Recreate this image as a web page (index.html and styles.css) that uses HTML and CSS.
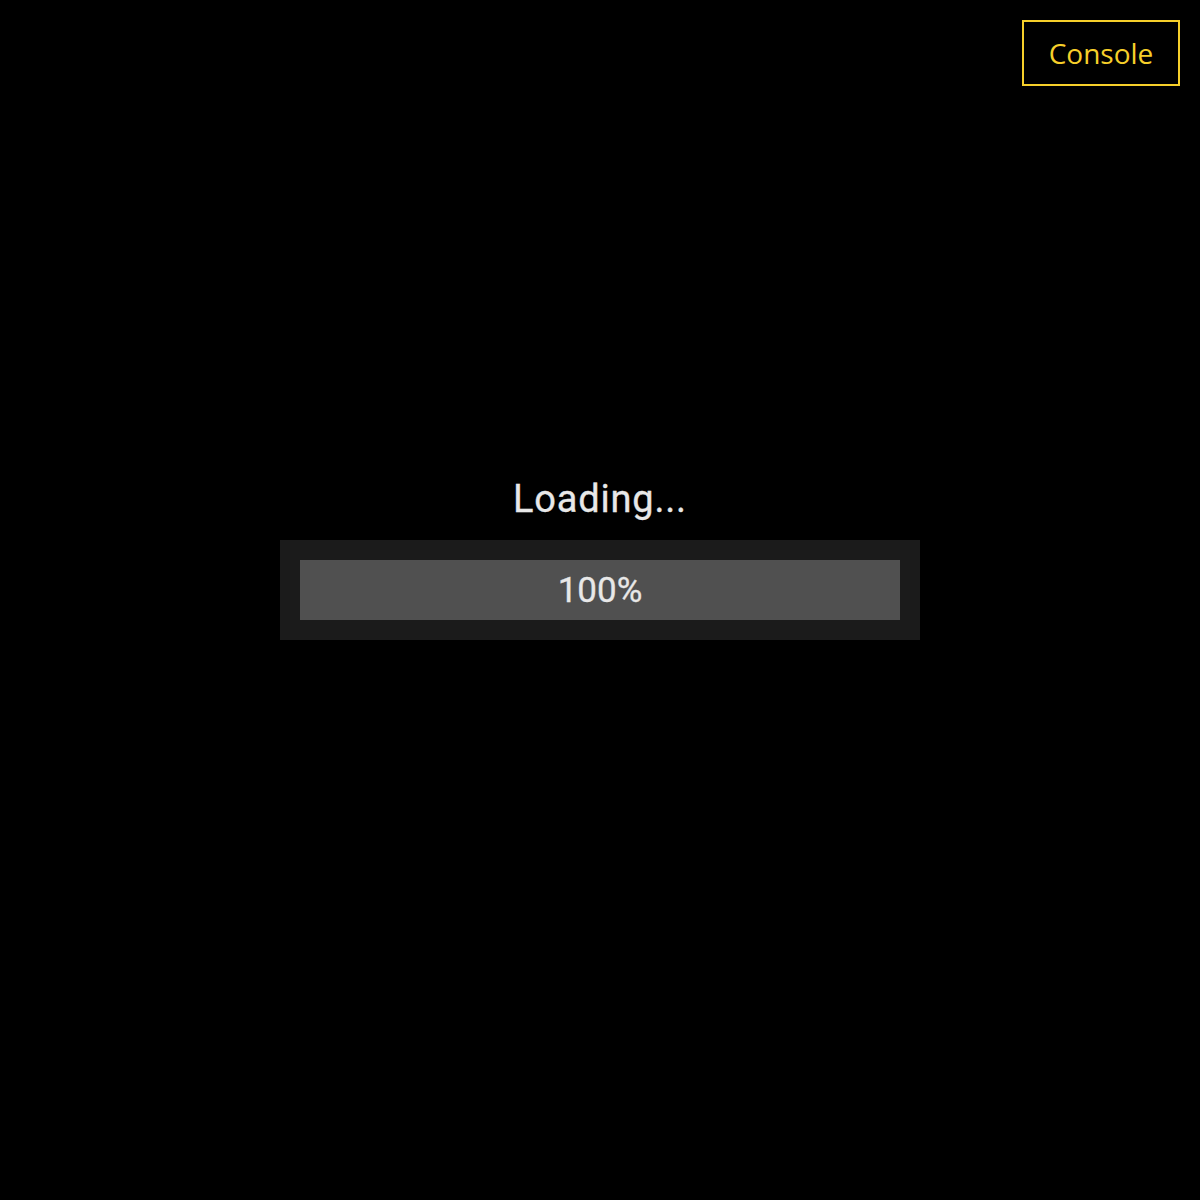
FILE: index.html
```html
<!DOCTYPE html>
<html lang="en">
<head>
<meta charset="utf-8">
<title>Loading</title>
<link rel="stylesheet" href="styles.css">
</head>
<body>
<div class="page">
  <header class="topbar">
    <button class="console-btn" type="button">Console</button>
  </header>
  <main class="loader">
    <div class="loader-title">Loading...</div>
    <div class="progress-frame">
      <div class="progress-bar">100%</div>
    </div>
  </main>
</div>
</body>
</html>
```

FILE: styles.css
```css
html, body {
  margin: 0;
  padding: 0;
  background: #000;
}

.page {
  width: 1200px;
  height: 1200px;
  display: flex;
  flex-direction: column;
  background: #000;
}

.topbar {
  display: flex;
  justify-content: flex-end;
  padding: 20px 20px 0 0;
}

.console-btn {
  box-sizing: border-box;
  width: 158px;
  height: 66px;
  margin: 0;
  padding: 0;
  background: #000;
  border: 2px solid #f6cf2a;
  color: #f6cf2a;
  font-family: "Open Sans", "Noto Sans", sans-serif;
  font-size: 28px;
  line-height: 1;
  display: flex;
  align-items: center;
  justify-content: center;
}

.loader {
  margin-top: 391px;
  display: flex;
  flex-direction: column;
  align-items: center;
}

.loader-title {
  font-family: Roboto, "Liberation Sans", sans-serif;
  font-size: 38px;
  line-height: 44px;
  color: #e8e8e8;
  letter-spacing: 0.8px;
  -webkit-text-stroke: 0.3px #e8e8e8;
}

.progress-frame {
  box-sizing: border-box;
  margin-top: 19px;
  width: 640px;
  height: 100px;
  padding: 20px;
  background: #1b1b1b;
}

.progress-bar {
  height: 60px;
  background: #505050;
  display: flex;
  align-items: center;
  justify-content: center;
  font-family: Roboto, "Liberation Sans", sans-serif;
  font-size: 35px;
  color: #e8e8e8;
  -webkit-text-stroke: 0.3px #e8e8e8;
}
```
